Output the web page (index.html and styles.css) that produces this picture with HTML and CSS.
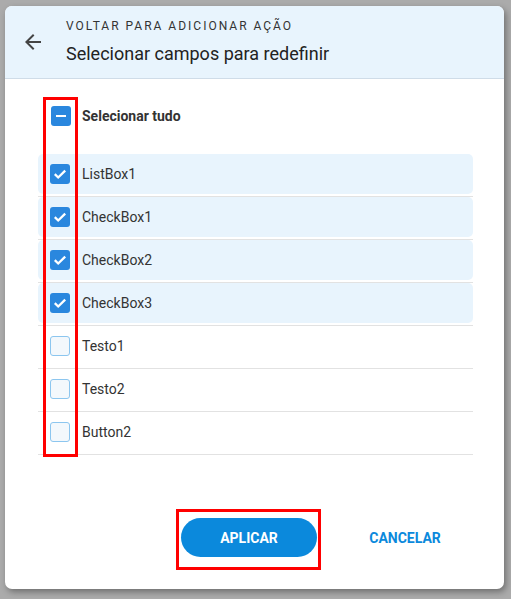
FILE: index.html
```html
<!DOCTYPE html>
<html lang="pt">
<head>
<meta charset="utf-8">
<link rel="stylesheet" href="styles.css">
</head>
<body>
<div class="card">
  <header class="header">
    <button class="back" aria-label="Voltar">
      <svg width="24" height="24" viewBox="0 0 24 24"><path d="M20 11H7.83l5.59-5.59L12 4l-8 8 8 8 1.41-1.41L7.83 13H20v-2z" fill="#444"/></svg>
    </button>
    <div class="titles">
      <div class="overline">VOLTAR PARA ADICIONAR AÇÃO</div>
      <div class="title">Selecionar campos para redefinir</div>
    </div>
  </header>
  <main class="body">
    <div class="highlight-col"></div>
    <div class="select-all">
      <span class="cb cb-on"><svg width="20" height="20" viewBox="0 0 20 20"><rect x="5" y="9" width="10" height="2" fill="#fff"/></svg></span>
      <span class="label bold">Selecionar tudo</span>
    </div>
    <ul class="list">
      <li class="item"><div class="row checked"><span class="cb cb-on"><svg width="20" height="20" viewBox="0 0 20 20"><path d="M4.8 10.2l3.4 3.3L15.2 6.6" stroke="#fff" stroke-width="2.3" fill="none"/></svg></span><span class="label">ListBox1</span></div></li>
      <li class="item"><div class="row checked"><span class="cb cb-on"><svg width="20" height="20" viewBox="0 0 20 20"><path d="M4.8 10.2l3.4 3.3L15.2 6.6" stroke="#fff" stroke-width="2.3" fill="none"/></svg></span><span class="label">CheckBox1</span></div></li>
      <li class="item"><div class="row checked"><span class="cb cb-on"><svg width="20" height="20" viewBox="0 0 20 20"><path d="M4.8 10.2l3.4 3.3L15.2 6.6" stroke="#fff" stroke-width="2.3" fill="none"/></svg></span><span class="label">CheckBox2</span></div></li>
      <li class="item"><div class="row checked"><span class="cb cb-on"><svg width="20" height="20" viewBox="0 0 20 20"><path d="M4.8 10.2l3.4 3.3L15.2 6.6" stroke="#fff" stroke-width="2.3" fill="none"/></svg></span><span class="label">CheckBox3</span></div></li>
      <li class="item"><div class="row"><span class="cb cb-off"></span><span class="label">Testo1</span></div></li>
      <li class="item"><div class="row"><span class="cb cb-off"></span><span class="label">Testo2</span></div></li>
      <li class="item"><div class="row"><span class="cb cb-off"></span><span class="label">Button2</span></div></li>
    </ul>
  </main>
  <footer class="footer">
    <div class="mark"><button class="btn btn-primary">APLICAR</button></div>
    <button class="btn btn-text">CANCELAR</button>
  </footer>
</div>
</body>
</html>
```
FILE: styles.css
```css
* { box-sizing: border-box; }
html, body { margin: 0; }
body {
  background: #ababab;
  padding: 6px 7px 0 5px;
  font-family: Roboto, "Liberation Sans", sans-serif;
  width: 511px;
  height: 599px;
  overflow: hidden;
}
.card {
  width: 499px;
  height: 583px;
  background: #fff;
  border-radius: 7px;
  box-shadow: 2px 3px 6px rgba(0,0,0,0.35);
  overflow: hidden;
  position: relative;
  display: flex;
  flex-direction: column;
}
.header {
  height: 73px;
  background: #e8f4fd;
  border-bottom: 1px solid #cfdce8;
  display: flex;
  align-items: center;
  padding-left: 16px;
}
.back {
  width: 24px;
  height: 24px;
  padding: 0;
  border: 0;
  background: none;
  display: flex;
  margin-right: 21px;
}
.titles { display: flex; flex-direction: column; }
.overline {
  font-size: 12px;
  letter-spacing: 2px;
  color: #333;
  line-height: 16px;
  margin-top: 0;
}
.title {
  font-size: 18px;
  color: #222;
  line-height: 24px;
  margin-top: 8px;
}
.body {
  position: relative;
  padding: 17px 31px 0 33px;
  flex: 1;
}
.highlight-col {
  position: absolute;
  left: 38px;
  top: 18px;
  width: 35px;
  height: 360px;
  border: 3px solid #ff0000;
  pointer-events: none;
  z-index: 2;
}
.select-all {
  height: 40px;
  display: flex;
  align-items: center;
  padding-left: 13px;
  gap: 11px;
}
.list {
  list-style: none;
  margin: 18px 0 0;
  padding: 0;
}
.item {
  border-bottom: 1px solid #e2e2e2;
  padding-bottom: 2px;
}
.row {
  height: 40px;
  display: flex;
  align-items: center;
  padding-left: 12px;
  gap: 12px;
  border-radius: 5px;
}
.row.checked { background: #e8f4fd; }
.cb {
  width: 20px;
  height: 20px;
  border-radius: 3px;
  display: flex;
  flex: none;
}
.cb-on { background: #2a87de; }
.cb-off { background: #f3f8fc; border: 1px solid #8cc6ef; }
.label { font-size: 14px; color: #333; }
.bold { font-weight: 700; }
.footer {
  height: 80px;
  display: flex;
  align-items: flex-start;
  justify-content: flex-end;
  padding-right: 31px;
  gap: 16px;
}
.mark {
  border: 3px solid #ff0000;
  padding: 6px 1px 10px 2px;
}
.btn {
  width: 136px;
  height: 39px;
  border: 0;
  border-radius: 20px;
  font-family: Roboto, "Liberation Sans", sans-serif;
  font-weight: 700;
  font-size: 14px;
  padding: 0;
}
.btn-primary { background: #0b89dc; color: #fff; }
.btn-text { background: transparent; color: #0b89dc; margin-top: 9px; }
```
